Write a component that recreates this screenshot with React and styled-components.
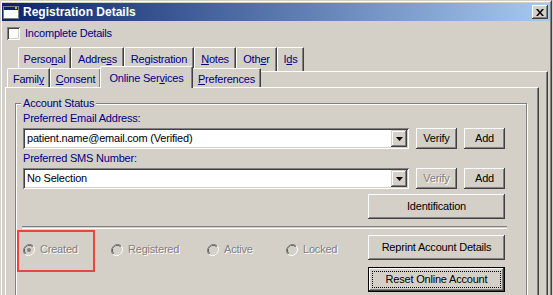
import React from "react";
import styled, { createGlobalStyle } from "styled-components";

const GlobalStyle = createGlobalStyle`
  html, body {
    margin: 0;
    padding: 0;
    background: #d4d0c8;
    overflow: hidden;
  }
  body {
    font-family: "Liberation Sans", Arial, sans-serif;
    font-size: 11px;
    line-height: 13px;
    letter-spacing: -0.2px;
  }
`;

const Window = styled.div`
  position: relative;
  width: 552px;
  height: 295px;
  box-sizing: border-box;
  border-left: 1px solid #d4d0c8;
  border-top: 1px solid #d4d0c8;
  border-right: 1px solid #404040;
  background: #d4d0c8;
  overflow: hidden;
`;

const Frame = styled.div`
  height: 100%;
  box-sizing: border-box;
  border-left: 1px solid #fff;
  border-top: 1px solid #fff;
  border-right: 1px solid #808080;
  padding-top: 1px;
  display: flex;
  flex-direction: column;
`;

const TitleBar = styled.div`
  height: 18px;
  flex: none;
  display: flex;
  align-items: center;
  padding-left: 1px;
  background: linear-gradient(90deg, #0a246a 0%, #a6caf0 100%);
`;

const TitleText = styled.span`
  margin-left: 4px;
  color: #fff;
  font-weight: bold;
  font-size: 12px;
  letter-spacing: 0;
`;

const CloseButton = styled.div`
  margin-left: auto;
  margin-right: 2px;
  width: 16px;
  height: 14px;
  box-sizing: border-box;
  background: #d4d0c8;
  box-shadow: inset -1px -1px #404040, inset 1px 1px #fff, inset -2px -2px #808080;
  display: flex;
  align-items: center;
  justify-content: center;
`;

const CheckRow = styled.div`
  display: flex;
  align-items: center;
  height: 13px;
  margin-top: 6px;
  padding-left: 5px;
  gap: 5px;
  color: #000080;
`;

const CheckBox = styled.div`
  width: 13px;
  height: 13px;
  box-sizing: border-box;
  background: #fff;
  box-shadow: inset 1px 1px #808080, inset -1px -1px #fff, inset 2px 2px #404040, inset -2px -2px #d4d0c8;
`;

const TabControl = styled.div`
  flex: 1;
  display: flex;
  flex-direction: column;
  margin-top: 7px;
`;

const BackRow = styled.div`
  display: flex;
  height: 24px;
  padding-left: 16px;
`;

const Tab = styled.div`
  box-sizing: border-box;
  width: ${(p) => p.$w}px;
  height: ${(p) => p.$h}px;
  flex: none;
  background: #d4d0c8;
  border-left: 1px solid #fff;
  border-top: 1px solid #fff;
  border-right: 1px solid #404040;
  border-top-left-radius: 2px;
  border-top-right-radius: 1px;
  box-shadow: inset -1px 0 #808080;
  color: #000080;
  text-align: center;
  white-space: nowrap;
  padding-top: ${(p) => p.$pt}px;
`;

const SelectedTab = styled(Tab)`
  margin: 0 -1px -1px -1px;
  position: relative;
  z-index: 2;
`;

const OuterPanel = styled.div`
  flex: 1;
  display: flex;
  flex-direction: column;
  margin-left: 5px;
  margin-right: 2px;
  border-top: 1px solid #fff;
  border-right: 1px solid #404040;
  box-shadow: inset -1px 0 #808080;
`;

const FrontRow = styled.div`
  display: flex;
  align-items: flex-end;
  height: 19px;
  margin-top: -4px;
  position: relative;
  z-index: 1;
`;

const InnerPanel = styled.div`
  flex: 1;
  margin-left: -2px;
  margin-right: 8px;
  border-top: 1px solid #fff;
  border-left: 1px solid #fff;
  border-right: 1px solid #404040;
  box-shadow: inset -1px 0 #808080;
  padding: 0 11px 0 9px;
`;

const GroupBox = styled.fieldset`
  margin: 9px 0 0 0;
  padding: 2px 21px 20px 7px;
  border: 1px solid #808080;
  box-shadow: 1px 1px 0 #fff, inset 1px 1px 0 #fff;
  min-width: 0;
`;

const Legend = styled.legend`
  margin-left: -2px;
  padding: 0 2px;
  color: #000080;
  background: #d4d0c8;
`;

const FieldLabel = styled.div`
  color: #000080;
  margin-bottom: 3px;
`;

const FieldRow = styled.div`
  display: flex;
  gap: 7px;
  margin-bottom: 3px;
`;

const Combo = styled.div`
  flex: 1;
  height: 21px;
  box-sizing: border-box;
  background: #fff;
  box-shadow: inset 1px 1px #808080, inset -1px -1px #fff, inset 2px 2px #404040, inset -2px -2px #d4d0c8;
  padding: 2px;
  display: flex;
  align-items: center;
`;

const ComboText = styled.span`
  flex: 1;
  padding-left: 2px;
  color: #000;
`;

const DropButton = styled.div`
  width: 16px;
  height: 17px;
  box-sizing: border-box;
  background: #d4d0c8;
  box-shadow: inset -1px -1px #404040, inset 1px 1px #d4d0c8, inset -2px -2px #808080, inset 2px 2px #fff;
  display: flex;
  align-items: center;
  justify-content: center;
`;

const Button = styled.div`
  box-sizing: border-box;
  width: ${(p) => p.$w}px;
  height: ${(p) => p.$h}px;
  flex: none;
  background: #d4d0c8;
  box-shadow: inset -1px -1px #404040, inset 1px 1px #fff, inset -2px -2px #808080;
  color: ${(p) => (p.$disabled ? "#808080" : "#000")};
  text-shadow: ${(p) => (p.$disabled ? "1px 1px 0 #fff" : "none")};
  display: flex;
  align-items: center;
  justify-content: center;
  white-space: nowrap;
`;

const DefaultButton = styled(Button)`
  border: 1px solid #000;
  padding: 3px;
`;

const FocusRect = styled.span`
  flex: 1;
  align-self: stretch;
  display: flex;
  align-items: center;
  justify-content: center;
  border: 1px dotted #000;
`;

const RightAligned = styled.div`
  display: flex;
  justify-content: flex-end;
  margin-top: 5px;
`;

const Separator = styled.div`
  height: 1px;
  margin: 7px -2px 6px -1px;
  border-top: 1px solid #808080;
  border-bottom: 1px solid #fff;
`;

const Lower = styled.div`
  display: flex;
  align-items: flex-start;
`;

const RadioRow = styled.div`
  flex: 1;
  display: flex;
  align-items: center;
  margin-top: 8px;
`;

const RadioItem = styled.div`
  display: flex;
  align-items: center;
  gap: 5px;
  width: ${(p) => (p.$w ? `${p.$w}px` : "auto")};
  color: #808080;
  text-shadow: 1px 1px 0 #fff;
`;

const ButtonColumn = styled.div`
  display: flex;
  flex-direction: column;
  gap: 7px;
`;

const Highlight = styled.div`
  position: absolute;
  left: 16px;
  top: 229px;
  width: 78px;
  height: 42px;
  box-sizing: border-box;
  border: 2px solid #e8473f;
`;

const WindowIcon = () => (
  <svg width="16" height="13" viewBox="0 0 16 13">
    <rect x="0.5" y="0.5" width="15" height="12" fill="#fff" stroke="#808080" />
    <rect x="1" y="1" width="14" height="3" fill="#0a246a" />
    <rect x="12" y="1" width="2" height="2" fill="#f0a040" />
  </svg>
);

const CloseGlyph = () => (
  <svg width="8" height="7" viewBox="0 0 8 7">
    <path d="M0 0h2l2 2.5L6 0h2L5 3.5 8 7H6L4 4.5 2 7H0l3-3.5z" fill="#000" />
  </svg>
);

const Arrow = () => (
  <svg width="7" height="4" viewBox="0 0 7 4">
    <path d="M0 0h7L3.5 4z" fill="#000" />
  </svg>
);

const Radio = ({ checked }) => (
  <svg width="12" height="12" viewBox="0 0 12 12">
    <path d="M10.2 1.8A6 6 0 0 0 1.8 10.2" fill="none" stroke="#808080" strokeWidth="1" />
    <path d="M9.5 2.5A5 5 0 0 0 2.5 9.5" fill="none" stroke="#404040" strokeWidth="1" />
    <path d="M1.8 10.2A6 6 0 0 0 10.2 1.8" fill="none" stroke="#fff" strokeWidth="1" />
    <circle cx="6" cy="6" r="4.2" fill="#d4d0c8" />
    {checked && <circle cx="6" cy="6" r="2" fill="#808080" />}
  </svg>
);

const Field = ({ value, verifyDisabled }) => (
  <FieldRow>
    <Combo>
      <ComboText>{value}</ComboText>
      <DropButton>
        <Arrow />
      </DropButton>
    </Combo>
    <Button $w={41} $h={21} $disabled={verifyDisabled}>
      Verify
    </Button>
    <Button $w={41} $h={21}>
      Add
    </Button>
  </FieldRow>
);

const App = () => (
  <>
    <GlobalStyle />
    <Window>
      <Frame>
        <TitleBar>
          <WindowIcon />
          <TitleText>Registration Details</TitleText>
          <CloseButton>
            <CloseGlyph />
          </CloseButton>
        </TitleBar>

        <CheckRow>
          <CheckBox />
          <span>Incomplete Details</span>
        </CheckRow>

        <TabControl>
          <BackRow>
            <Tab $w={53} $h={24} $pt={5}>
              Perso<u>n</u>al
            </Tab>
            <Tab $w={53} $h={24} $pt={5}>
              Addre<u>s</u>s
            </Tab>
            <Tab $w={70} $h={24} $pt={5}>
              Registration
            </Tab>
            <Tab $w={42} $h={24} $pt={5}>
              <u>N</u>otes
            </Tab>
            <Tab $w={41} $h={24} $pt={5}>
              Oth<u>e</u>r
            </Tab>
            <Tab $w={27} $h={24} $pt={5}>
              I<u>d</u>s
            </Tab>
          </BackRow>

          <OuterPanel>
            <FrontRow>
              <Tab $w={43} $h={19} $pt={4}>
                Famil<u>y</u>
              </Tab>
              <Tab $w={51} $h={19} $pt={4}>
                <u>C</u>onsent
              </Tab>
              <SelectedTab $w={93} $h={22} $pt={5}>
                Online Ser<u>v</u>ices
              </SelectedTab>
              <Tab $w={69} $h={19} $pt={4}>
                <u>P</u>references
              </Tab>
            </FrontRow>

            <InnerPanel>
              <GroupBox>
                <Legend>Account Status</Legend>
                <FieldLabel>Preferred Email Address:</FieldLabel>
                <Field value="patient.name@email.com (Verified)" />
                <FieldLabel>Preferred SMS Number:</FieldLabel>
                <Field value="No Selection" verifyDisabled />
                <RightAligned>
                  <Button $w={137} $h={25}>
                    Identification
                  </Button>
                </RightAligned>
                <Separator />
                <Lower>
                  <RadioRow>
                    <RadioItem $w={88}>
                      <Radio checked />
                      Created
                    </RadioItem>
                    <RadioItem $w={96}>
                      <Radio />
                      Registered
                    </RadioItem>
                    <RadioItem $w={79}>
                      <Radio />
                      Active
                    </RadioItem>
                    <RadioItem>
                      <Radio />
                      Locked
                    </RadioItem>
                  </RadioRow>
                  <ButtonColumn>
                    <Button $w={137} $h={25}>
                      Reprint Account Details
                    </Button>
                    <DefaultButton $w={137} $h={25}>
                      <FocusRect>Reset Online Account</FocusRect>
                    </DefaultButton>
                  </ButtonColumn>
                </Lower>
              </GroupBox>
            </InnerPanel>
          </OuterPanel>
        </TabControl>
      </Frame>
      <Highlight />
    </Window>
  </>
);

export default App;
